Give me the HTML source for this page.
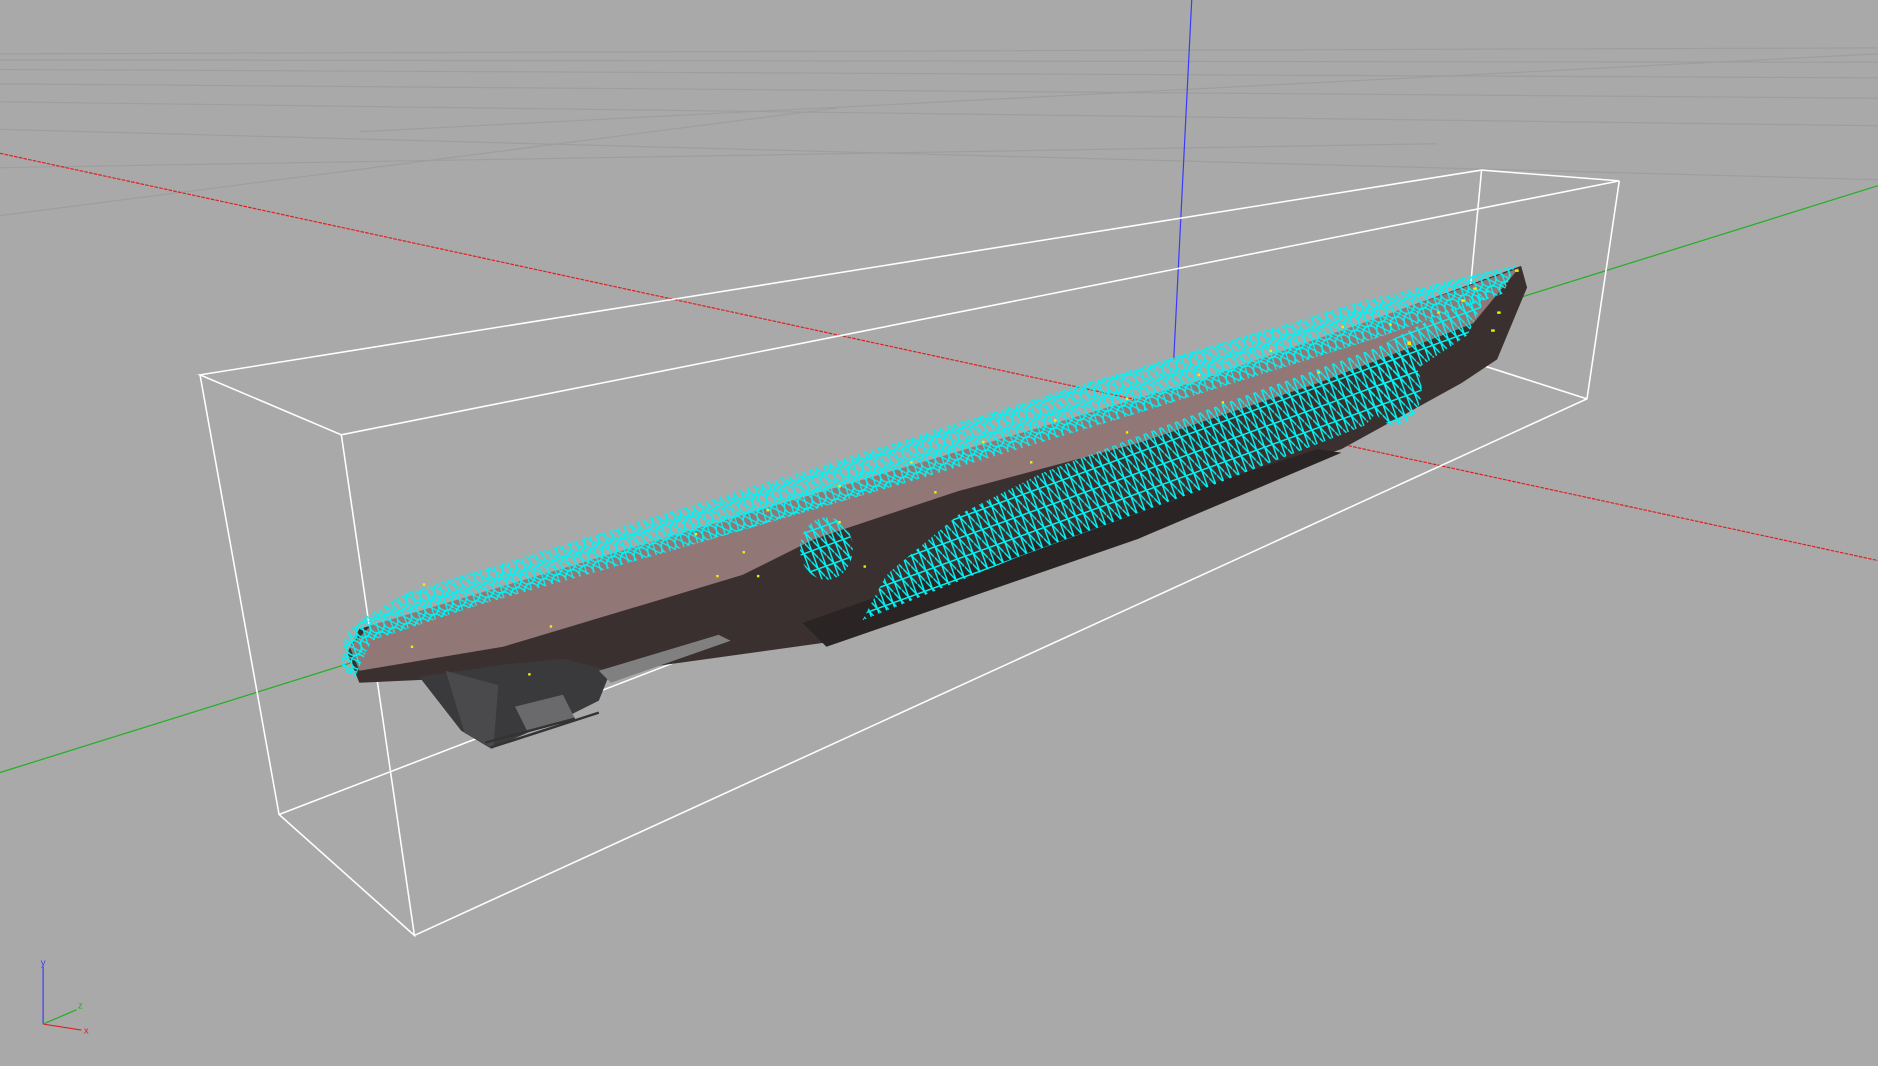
<!DOCTYPE html>
<html><head><meta charset="utf-8"><style>
html,body{margin:0;padding:0;background:#a9a9a9;overflow:hidden}
svg{display:block}
</style></head><body>
<svg width="1878" height="1066" viewBox="0 0 1568 890" preserveAspectRatio="none" xmlns="http://www.w3.org/2000/svg">
<defs>
<pattern id="mesh" width="12" height="12" patternUnits="userSpaceOnUse" patternTransform="rotate(-18)">
<circle cx="6" cy="6" r="6" stroke="#00f4f4" stroke-width="1.3" fill="none"/>
<path d="M6 0V12M0 0L12 12" stroke="#00f4f4" stroke-width="1.1" fill="none"/>
</pattern>
<pattern id="mesh2" width="7" height="16" patternUnits="userSpaceOnUse" patternTransform="rotate(-20)">
<path d="M0 0L7 16M3.5 0V16M0 8H7" stroke="#00f4f4" stroke-width="1.2" fill="none"/>
</pattern>
</defs>
<rect width="1568" height="890" fill="#a9a9a9"/>
<g stroke="#9e9e9e" stroke-width="1" fill="none">
<path d="M0 45L1568 40M0 50L1568 52M0 58L1568 65M0 70L1568 82M0 85L1568 105M0 108L1568 150M0 140L1200 120M0 180L700 90M300 110L1568 45"/>
</g>
<line x1="995" y1="0" x2="980" y2="300" stroke="#3a3aff" stroke-width="1"/>
<line x1="0" y1="128" x2="1568" y2="468" stroke="#e02020" stroke-width="1" stroke-dasharray="3 1"/>
<line x1="0" y1="645" x2="1568" y2="155" stroke="#20b020" stroke-width="1"/>
<g stroke="#ffffff" stroke-width="1.3" fill="none">
<path d="M167 313L1237 142L1352 151L285 363Z"/>
<path d="M167 313L233 680L346 781L285 363"/>
<path d="M1352 151L1325 333L346 781"/>
<path d="M233 680L1222 300L1325 333M1237 142L1222 300"/>
</g>
<path d="M290 545L300 525L600 440L1000 320L1270 222L1275 240L1250 300L1220 320L1120 375L900 450L700 535L520 560L300 570Z" fill="#3b3030"/>
<path d="M292 540L310 522L620 430L1000 318L1268 224L1230 270L1100 320L950 370L800 410L680 450L620 480L420 540L300 560Z" fill="#927777"/>
<path d="M670 520L690 540L950 450L1120 378L1100 375L900 440Z" fill="#2a2424"/>
<path d="M350 565L385 610L410 625L440 612L470 600L500 585L510 560L470 550L420 555Z" fill="#3a3a3c"/>
<path d="M372 560L388 612L412 625L416 572Z" fill="#4a4a4c"/>
<path d="M430 590L470 580L480 600L440 610Z" fill="#6a6a6c"/>
<path d="M500 560L600 530L610 535L510 570Z" fill="#808080"/>
<path d="M405 620L480 600M410 624L500 595" stroke="#333" stroke-width="2"/>
<path d="M285 555L288 530L305 515L340 495L600 415L900 322L1150 248L1265 222L1255 245L1150 282L950 345L750 405L560 460L400 505L310 535L295 568Z" fill="url(#mesh)"/>
<path d="M720 518L740 480L800 430L870 395L1000 345L1150 290L1245 240L1225 280L1180 310L1140 355L1000 410L850 465Z" fill="url(#mesh2)"/>
<ellipse cx="690" cy="458" rx="22" ry="26" fill="url(#mesh2)"/>
<ellipse cx="1165" cy="325" rx="22" ry="30" fill="url(#mesh2)"/>
<g fill="#f0f000">
<rect x="353" y="487" width="2" height="2"/><rect x="459" y="522" width="2" height="2"/><rect x="598" y="480" width="2" height="2"/><rect x="632" y="480" width="2" height="2"/><rect x="721" y="472" width="2" height="2"/><rect x="343" y="539" width="2" height="2"/><rect x="441" y="562" width="2" height="2"/><rect x="1175" y="285" width="3" height="3"/><rect x="1230" y="240" width="3" height="2"/><rect x="1250" y="260" width="3" height="2"/><rect x="1245" y="275" width="3" height="2"/><rect x="1265" y="225" width="3" height="2"/><rect x="1220" y="250" width="3" height="2"/><rect x="1200" y="260" width="2" height="2"/><rect x="1160" y="270" width="2" height="2"/>
<rect x="580" y="445" width="2" height="2"/><rect x="640" y="425" width="2" height="2"/><rect x="700" y="405" width="2" height="2"/><rect x="760" y="385" width="2" height="2"/><rect x="820" y="368" width="2" height="2"/><rect x="880" y="350" width="2" height="2"/><rect x="940" y="332" width="2" height="2"/><rect x="1000" y="312" width="2" height="2"/><rect x="1060" y="292" width="2" height="2"/><rect x="1120" y="272" width="2" height="2"/>
<rect x="620" y="460" width="2" height="2"/><rect x="700" y="435" width="2" height="2"/><rect x="780" y="410" width="2" height="2"/><rect x="860" y="385" width="2" height="2"/><rect x="940" y="360" width="2" height="2"/><rect x="1020" y="335" width="2" height="2"/><rect x="1100" y="310" width="2" height="2"/>
</g>
<line x1="36" y1="855" x2="36" y2="807" stroke="#3a3aff" stroke-width="1"/>
<line x1="36" y1="855" x2="68" y2="860" stroke="#e02020" stroke-width="1"/>
<line x1="36" y1="855" x2="64" y2="843" stroke="#20b020" stroke-width="1"/>
<text x="34" y="806" font-family="Liberation Sans,sans-serif" font-size="8" fill="#3a3aff">y</text>
<text x="70" y="863" font-family="Liberation Sans,sans-serif" font-size="8" fill="#e02020">x</text>
<text x="65" y="842" font-family="Liberation Sans,sans-serif" font-size="8" fill="#20b020">z</text>
</svg>
</body></html>
